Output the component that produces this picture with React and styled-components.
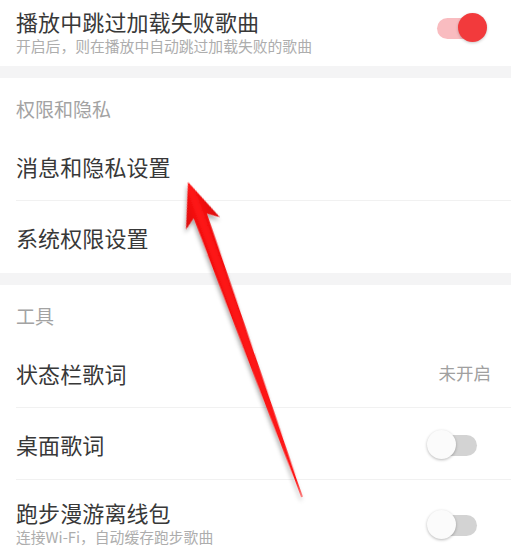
import React from "react";
import styled, { createGlobalStyle } from "styled-components";

const Global = createGlobalStyle`
  html, body { margin: 0; padding: 0; background: #ffffff; }
  body { font-family: "Noto Sans CJK SC", "Noto Sans", sans-serif; }
`;

const Page = styled.div`
  position: relative;
  width: 511px;
  height: 549px;
  overflow: hidden;
  background: #ffffff;
`;

const Band = styled.div`
  height: 12px;
  background: #f4f4f5;
`;

const SectionHeader = styled.div`
  padding: 20px 16px 10px;
  font-size: 19px;
  line-height: 22px;
  color: #a3a3a3;
`;

const Row = styled.div`
  position: relative;
  display: flex;
  align-items: center;
  justify-content: space-between;
  box-sizing: border-box;
  height: ${(p) => p.$h}px;
  padding: ${(p) => p.$pad || "0 24px 0 16px"};
  &::after {
    content: "";
    display: ${(p) => (p.$divider ? "block" : "none")};
    position: absolute;
    left: 16px;
    right: 0;
    bottom: 0;
    height: 1px;
    background: #f1f1f1;
  }
`;

const TextCol = styled.div`
  display: flex;
  flex-direction: column;
  gap: 1px;
`;

const Title = styled.div`
  font-size: 22px;
  line-height: 28px;
  color: #383838;
  letter-spacing: 0.1px;
`;

const Sub = styled.div`
  font-size: 14.8px;
  line-height: 20px;
  color: #adadad;
`;

const Value = styled.div`
  font-size: 17.5px;
  color: #a0a0a0;
  margin-right: -4px;
`;

const ToggleWrap = styled.div`
  position: relative;
  width: 60px;
  height: 30px;
  flex: none;
  margin-top: ${(p) => p.$dy || 0}px;
`;

const Track = styled.div`
  position: absolute;
  left: 10px;
  top: 5px;
  width: 40px;
  height: 21px;
  border-radius: 11px;
  background: ${(p) => (p.$on ? "#f9bcc0" : "#d3d3d3")};
`;

const Knob = styled.div`
  position: absolute;
  top: 0;
  left: ${(p) => (p.$on ? 31 : 0)}px;
  width: 29px;
  height: 29px;
  border-radius: 50%;
  background: ${(p) => (p.$on ? "#f23a3c" : "#fbfbfb")};
  box-shadow: 0 1px 3px rgba(0, 0, 0, ${(p) => (p.$on ? 0.22 : 0.28)});
`;

const Toggle = ({ on, dy }) => (
  <ToggleWrap $dy={dy}>
    <Track $on={on} />
    <Knob $on={on} />
  </ToggleWrap>
);

const ArrowLayer = styled.svg`
  position: absolute;
  left: 0;
  top: 0;
  width: 511px;
  height: 549px;
  pointer-events: none;
`;

export default function App() {
  return (
    <>
      <Global />
      <Page>
        <Row $h={66} $pad="7px 24px 10px 16px">
          <TextCol>
            <Title>播放中跳过加载失败歌曲</Title>
            <Sub>开启后，则在播放中自动跳过加载失败的歌曲</Sub>
          </TextCol>
          <Toggle on dy={-8} />
        </Row>
        <Band />
        <SectionHeader>权限和隐私</SectionHeader>
        <Row $h={71} $divider>
          <Title>消息和隐私设置</Title>
        </Row>
        <Row $h={72}>
          <Title>系统权限设置</Title>
        </Row>
        <Band />
        <SectionHeader>工具</SectionHeader>
        <Row $h={71} $divider>
          <Title>状态栏歌词</Title>
          <Value>未开启</Value>
        </Row>
        <Row $h={72} $divider>
          <Title>桌面歌词</Title>
          <Toggle dy={2} />
        </Row>
        <Row $h={80} $pad="4px 24px 0 16px">
          <TextCol>
            <Title>跑步漫游离线包</Title>
            <Sub>连接Wi-Fi，自动缓存跑步歌曲</Sub>
          </TextCol>
          <Toggle dy={6} />
        </Row>
        <ArrowLayer viewBox="0 0 511 549">
          <defs>
            <filter id="sh" x="-50%" y="-50%" width="200%" height="200%">
              <feDropShadow dx="3" dy="2" stdDeviation="2" floodColor="#000" floodOpacity="0.35" />
            </filter>
            <linearGradient id="rg" x1="0" y1="-18" x2="0" y2="18" gradientUnits="userSpaceOnUse">
              <stop offset="0" stopColor="#d80808" />
              <stop offset="0.5" stopColor="#ff1414" />
              <stop offset="1" stopColor="#d80808" />
            </linearGradient>
          </defs>
          <g transform="translate(188 182) rotate(70.1)" filter="url(#sh)">
            <path
              d="M0 0 L44 18 L36 7 Q200 4 335 0.4 L335 -0.4 Q200 -4 36 -7 L44 -18 Z"
              fill="url(#rg)"
            />
          </g>
        </ArrowLayer>
      </Page>
    </>
  );
}
